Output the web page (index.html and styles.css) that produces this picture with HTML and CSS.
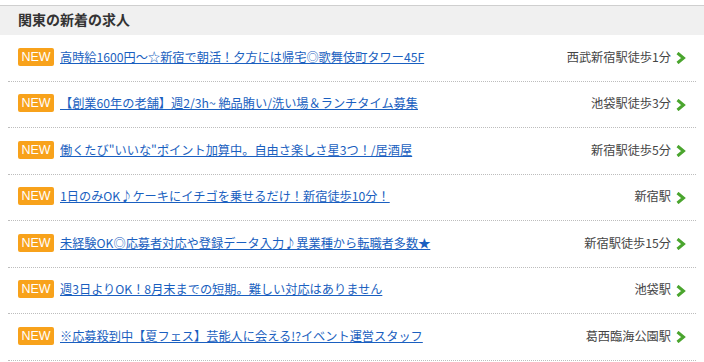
FILE: index.html
```html
<!DOCTYPE html>
<html lang="ja">
<head>
    <meta charset="UTF-8" />
    <meta name="viewport" content="width=device-width, initial-scale=1.0" />
    <title>関東の新着の求人</title>
    <link rel="stylesheet" href="styles.css">
</head>
<body>
    <div class="box">
        <h2 class="box-title">関東の新着の求人</h2>
        <ul class="job-list">
            <li class="job">
                <span class="badge">NEW</span>
                <a class="job-title" href="#">高時給1600円～☆新宿で朝活！夕方には帰宅◎歌舞伎町タワー45F</a>
                <span class="station">西武新宿駅徒歩1分</span>
                <svg class="arrow" width="10" height="12" viewBox="0 0 10 12"><polyline points="1.5,1 7.5,6 1.5,11" /></svg>
            </li>
            <li class="job">
                <span class="badge">NEW</span>
                <a class="job-title" href="#">【創業60年の老舗】週2/3h~ 絶品賄い/洗い場＆ランチタイム募集</a>
                <span class="station">池袋駅徒歩3分</span>
                <svg class="arrow" width="10" height="12" viewBox="0 0 10 12"><polyline points="1.5,1 7.5,6 1.5,11" /></svg>
            </li>
            <li class="job">
                <span class="badge">NEW</span>
                <a class="job-title" href="#">働くたび"いいな"ポイント加算中。自由さ楽しさ星3つ！/居酒屋</a>
                <span class="station">新宿駅徒歩5分</span>
                <svg class="arrow" width="10" height="12" viewBox="0 0 10 12"><polyline points="1.5,1 7.5,6 1.5,11" /></svg>
            </li>
            <li class="job">
                <span class="badge">NEW</span>
                <a class="job-title" href="#">1日のみOK♪ケーキにイチゴを乗せるだけ！新宿徒歩10分！</a>
                <span class="station">新宿駅</span>
                <svg class="arrow" width="10" height="12" viewBox="0 0 10 12"><polyline points="1.5,1 7.5,6 1.5,11" /></svg>
            </li>
            <li class="job">
                <span class="badge">NEW</span>
                <a class="job-title" href="#">未経験OK◎応募者対応や登録データ入力♪異業種から転職者多数★</a>
                <span class="station">新宿駅徒歩15分</span>
                <svg class="arrow" width="10" height="12" viewBox="0 0 10 12"><polyline points="1.5,1 7.5,6 1.5,11" /></svg>
            </li>
            <li class="job">
                <span class="badge">NEW</span>
                <a class="job-title" href="#">週3日よりOK！8月末までの短期。難しい対応はありません</a>
                <span class="station">池袋駅</span>
                <svg class="arrow" width="10" height="12" viewBox="0 0 10 12"><polyline points="1.5,1 7.5,6 1.5,11" /></svg>
            </li>
            <li class="job">
                <span class="badge">NEW</span>
                <a class="job-title" href="#">※応募殺到中【夏フェス】芸能人に会える!?イベント運営スタッフ</a>
                <span class="station">葛西臨海公園駅</span>
                <svg class="arrow" width="10" height="12" viewBox="0 0 10 12"><polyline points="1.5,1 7.5,6 1.5,11" /></svg>
            </li>
        </ul>
    </div>
</body>
</html>
```

FILE: styles.css
```css
body {
    margin: 0;
    padding-top: 5px;
    background-color: #fff;
    font-family: "Noto Sans CJK JP", "Noto Sans", sans-serif;
    color: #333;
}

/* 見出しの帯 */
.box-title {
    margin: 0;
    height: 29px;
    line-height: 27px;
    padding-left: 18px;
    border-top: 1px solid #cfcfcf;
    background-color: #f0f0f0;
    font-size: 14px;
    font-weight: bold;
    color: #333;
}

.job-list {
    list-style: none;
    margin: 0 8px;
    padding: 0;
}

.job {
    display: flex;
    align-items: center;
    height: 46.5px;
    padding: 0 10px 2px 10px;
    box-sizing: border-box;
    border-bottom: 1px dotted #bdbdbd;
}

.badge {
    flex: none;
    width: 36px;
    height: 18px;
    line-height: 18px;
    border-radius: 2px;
    background-color: #f8a21b;
    color: #fff;
    font-family: "Liberation Sans", Arial, sans-serif;
    font-size: 12.5px;
    text-align: center;
}

.job-title {
    margin-left: 6px;
    flex: 1;
    font-size: 12.2px;
    color: #1a5fc0;
    text-decoration: underline;
    white-space: nowrap;
}

.station {
    font-size: 12.2px;
    color: #444;
    white-space: nowrap;
}

.arrow {
    flex: none;
    margin-left: 5px;
    margin-top: 3px;
}

.arrow polyline {
    fill: none;
    stroke: #4aa52e;
    stroke-width: 3;
}
```
